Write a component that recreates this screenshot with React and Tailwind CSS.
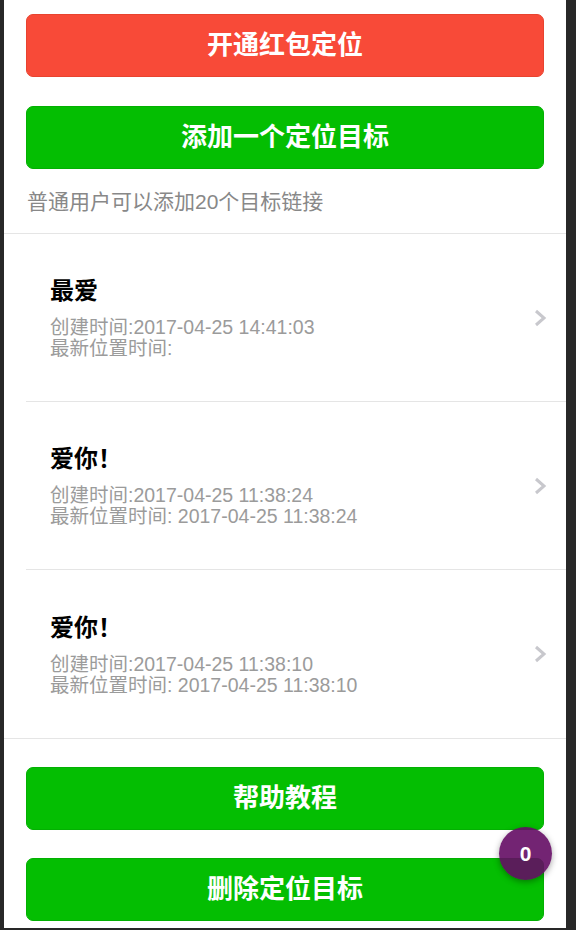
import React from "react";

const targets = [
  { id: 1, name: "最爱", created: "2017-04-25 14:41:03", located: "" },
  { id: 2, name: "爱你！", created: "2017-04-25 11:38:24", located: " 2017-04-25 11:38:24" },
  { id: 3, name: "爱你！", created: "2017-04-25 11:38:10", located: " 2017-04-25 11:38:10" },
];

const fontStack = { fontFamily: '"Liberation Sans", "Noto Sans CJK SC", sans-serif' };

const Button = ({ children, color = "green" }) => (
  <button
    className={
      color === "red"
        ? "block w-full h-[63px] rounded-[7px] border border-[#e8432f] bg-[#f84a38] text-white text-[26px] font-semibold"
        : "block w-full h-[63px] rounded-[7px] border border-[#03b002] bg-[#04be02] text-white text-[26px] font-semibold"
    }
  >
    {children}
  </button>
);

const Chevron = () => (
  <svg width="14" height="18" viewBox="0 0 14 18" className="shrink-0">
    <polyline points="3,2 11,9 3,16" fill="none" stroke="#c8c8cd" strokeWidth="3" strokeLinejoin="miter" />
  </svg>
);

const TargetRow = ({ target, last }) => (
  <div className="pl-[22px]">
    <div className={`flex items-center h-[168px] pr-[19px] ${last ? "" : "border-b border-[#e5e5e5]"}`}>
      <div className="flex-1 pl-[24px]">
        <div className="text-[24px] leading-[29px] font-bold text-black">{target.name}</div>
        <div className="mt-[12px] text-[19.5px] leading-[21px] text-[#9b9b9b]">
          <div>创建时间:{target.created}</div>
          <div>最新位置时间:{target.located}</div>
        </div>
      </div>
      <Chevron />
    </div>
  </div>
);

export default function App() {
  return (
    <div className="relative w-[576px] h-[930px] bg-[#282828] overflow-hidden" style={fontStack}>
      <div className="ml-[4px] w-[562px] h-[928px] bg-white flex flex-col">
        <div className="px-[22px] pt-[14px]">
          <Button color="red">开通红包定位</Button>
          <div className="mt-[29px]">
            <Button>添加一个定位目标</Button>
          </div>
          <p className="mt-[18px] text-[21px] leading-[29px] text-[#888888] pl-[1px]">普通用户可以添加20个目标链接</p>
        </div>

        <div className="mt-[17px] border-t border-b border-[#e5e5e5]">
          {targets.map((t, i) => (
            <TargetRow key={t.id} target={t} last={i === targets.length - 1} />
          ))}
        </div>

        <div className="px-[22px] pt-[28px]">
          <Button>帮助教程</Button>
          <div className="mt-[28px]">
            <Button>删除定位目标</Button>
          </div>
        </div>
      </div>

      {/* floating counter */}
      <div className="absolute left-[499px] top-[827px] w-[53px] h-[53px] rounded-full bg-[#640c64]/90 shadow-[0_2px_6px_rgba(0,0,0,0.35)] flex items-center justify-center text-white text-[21px] font-semibold">
        0
      </div>
    </div>
  );
}
